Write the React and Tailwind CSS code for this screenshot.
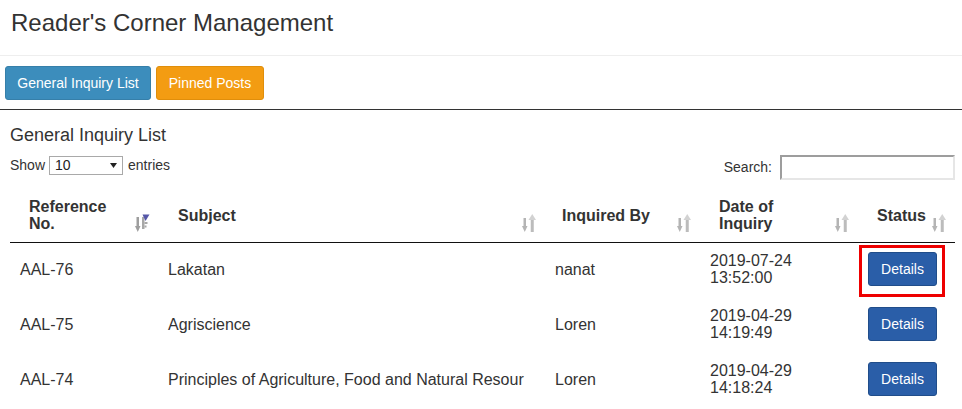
import React from "react"

const rows = [
  { ref: "AAL-76", subject: "Lakatan", by: "nanat", date: "2019-07-24", time: "13:52:00", marked: true },
  { ref: "AAL-75", subject: "Agriscience", by: "Loren", date: "2019-04-29", time: "14:19:49" },
  { ref: "AAL-74", subject: "Principles of Agriculture, Food and Natural Resour", by: "Loren", date: "2019-04-29", time: "14:18:24" },
]

const SortIcon = ({ active }) => {
  if (active) {
    return (
      <svg width="15" height="20" viewBox="0 0 15 20">
        <rect x="1.5" y="4" width="2.5" height="11" fill="#9e9e9e" />
        <polygon points="0,13 5.5,13 2.75,19" fill="#9e9e9e" />
        <rect x="7" y="4" width="2.5" height="12" fill="#a8a8a8" />
        <rect x="9.5" y="9" width="3" height="2" fill="#a8a8a8" />
        <rect x="9.5" y="12.5" width="2" height="2" fill="#a8a8a8" />
        <polygon points="7.5,1.5 14.5,1.5 10.5,8" fill="#5557a8" />
      </svg>
    )
  }
  return (
    <svg width="15" height="20" viewBox="0 0 15 20">
      <rect x="1.5" y="5" width="2.5" height="10" fill="#b4b4b4" />
      <polygon points="0,13 5.5,13 2.75,19" fill="#b4b4b4" />
      <polygon points="6.5,7 14,7 10.25,1" fill="#d2d2d2" />
      <rect x="8.75" y="7" width="3" height="12" fill="#bcbcbc" />
    </svg>
  )
}

const Header = ({ children, active, pad = "pl-[19px]" }) => (
  <th className={`relative border-b border-[#111] pt-[10px] pb-[10px] ${pad} pr-[30px] text-left align-middle text-[16px] font-bold leading-[17px]`}>
    {children}
    <span className="absolute right-[8px] bottom-[9px] flex">
      <SortIcon active={active} />
    </span>
  </th>
)

const App = () => {
  return (
    <div className="h-[409px] w-[962px] overflow-hidden bg-white font-['Liberation_Sans',Arial,sans-serif] text-[#333]">
      {/* Title */}
      <div className="h-[56px] border-b border-[#eee] pl-[11px] pt-[10px]">
        <h1 className="text-[24px] leading-[26px]">Reader's Corner Management</h1>
      </div>

      {/* Tabs */}
      <div className="flex h-[54px] gap-[5px] border-b border-[#333] pl-[5px] pt-[10px]">
        <button className="h-[34px] w-[146px] rounded-[3px] border border-[#367fa9] bg-[#3c8dbc] text-[14px] leading-[20px] text-white">
          General Inquiry List
        </button>
        <button className="h-[34px] w-[108px] rounded-[3px] border border-[#e08e0b] bg-[#f39c12] text-[14px] leading-[20px] text-white">
          Pinned Posts
        </button>
      </div>

      <div className="pl-[10px] pr-[7px] pt-[15px]">
        <h3 className="text-[18px] leading-[20px]">General Inquiry List</h3>

        {/* Controls */}
        <div className="mt-[10px] flex items-start justify-between text-[14px]">
          <div className="flex items-center">
            <span>Show</span>
            <div className="ml-[4px] flex h-[19px] w-[74px] items-center justify-between border border-[#a9a9a9] bg-white pl-[5px] pr-[5px]">
              <span className="leading-[17px] text-[#222]">10</span>
              <svg width="7" height="5" viewBox="0 0 7 5">
                <polygon points="0,0 7,0 3.5,5" fill="#222" />
              </svg>
            </div>
            <span className="ml-[5px]">entries</span>
          </div>
          <div className="flex items-center">
            <span>Search:</span>
            <input className="ml-[8px] h-[25px] w-[175px] border-2 border-t-[#9d9d9d] border-l-[#9d9d9d] border-r-[#e6e6e6] border-b-[#e6e6e6] outline-none" />
          </div>
        </div>

        {/* Table */}
        <table className="mt-[8px] w-[945px] table-fixed border-collapse">
          <colgroup>
            <col className="w-[148px]" />
            <col className="w-[387px]" />
            <col className="w-[155px]" />
            <col className="w-[158px]" />
            <col className="w-[97px]" />
          </colgroup>
          <thead>
            <tr>
              <Header active>Reference No.</Header>
              <Header pad="pl-[20px]">Subject</Header>
              <Header pad="pl-[17px]">Inquired By</Header>
              <Header>Date of Inquiry</Header>
              <Header>Status</Header>
            </tr>
          </thead>
          <tbody className="text-[16px] leading-[17px]">
            {rows.map((r) => (
              <tr key={r.ref} className="h-[55px]">
                <td className="pb-[2px] pl-[10px] align-middle">{r.ref}</td>
                <td className="whitespace-nowrap pb-[2px] pl-[10px] align-middle">{r.subject}</td>
                <td className="pb-[2px] pl-[10px] align-middle">{r.by}</td>
                <td className="pb-[2px] pl-[10px] align-middle">
                  <div>{r.date}</div>
                  <div>{r.time}</div>
                </td>
                <td className="pb-[2px] pl-[10px] align-middle">
                  <div className="relative inline-block align-middle">
                    <button className="block h-[34px] w-[69px] rounded-[3px] border border-[#204d8a] bg-[#2a5ea8] text-[14px] leading-[20px] text-white">
                      Details
                    </button>
                    {r.marked && (
                      <span className="absolute left-[-9px] top-[-7px] h-[52px] w-[86px] border-[3px] border-[#ee0000]" />
                    )}
                  </div>
                </td>
              </tr>
            ))}
          </tbody>
        </table>
      </div>
    </div>
  )
}

export default App
